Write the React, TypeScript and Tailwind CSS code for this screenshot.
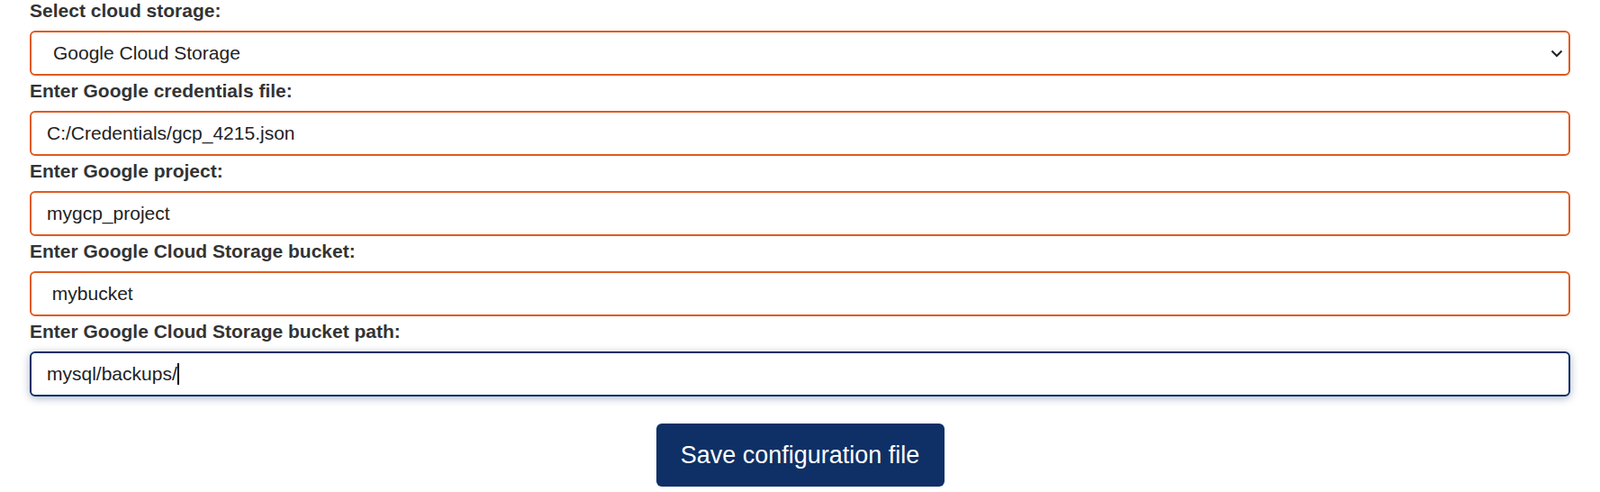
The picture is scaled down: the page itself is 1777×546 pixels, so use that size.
const fields = [
  { label: 'Enter Google credentials file:', value: 'C:/Credentials/gcp_4215.json' },
  { label: 'Enter Google project:', value: 'mygcp_project' },
  { label: 'Enter Google Cloud Storage bucket:', value: ' mybucket' },
]

function Label({ children, first }: { children: string; first?: boolean }) {
  return (
    <label
      className={`block text-[21px] leading-[24px] font-bold text-[#333333] mb-[10px] ${first ? '' : 'mt-[5px]'}`}
    >
      {children}
    </label>
  )
}

export default function App() {
  return (
    <div className="min-h-screen bg-white font-['Liberation_Sans',Arial,sans-serif]">
      <div className="px-[33px] pt-0">
        <Label first>Select cloud storage:</Label>
        <div className="relative">
          <select
            defaultValue="gcs"
            className="block w-full h-[50px] appearance-none rounded-[6px] border-2 border-[#e05a1f] bg-white pl-[24px] pr-10 text-[21px] text-[#222222] outline-none"
          >
            <option value="gcs">Google Cloud Storage</option>
            <option value="s3">Amazon S3</option>
            <option value="azure">Azure Blob Storage</option>
          </select>
          <svg
            className="pointer-events-none absolute right-[8px] top-1/2 -translate-y-1/2"
            width="14"
            height="10"
            viewBox="0 0 14 10"
            fill="none"
          >
            <path d="M1.5 2.5 L7 8 L12.5 2.5" stroke="#222" strokeWidth="2" />
          </svg>
        </div>

        {fields.map((f) => (
          <div key={f.label}>
            <Label>{f.label}</Label>
            <input
              readOnly
              defaultValue={f.value}
              className="block w-full h-[50px] rounded-[6px] border-2 border-[#e05a1f] bg-white pl-[17px] text-[21px] text-[#222222] outline-none"
            />
          </div>
        ))}

        <Label>Enter Google Cloud Storage bucket path:</Label>
        <div className="flex h-[50px] w-full items-center rounded-[6px] border-2 border-[#0f2f66] bg-white pl-[17px] text-[21px] text-[#222222] shadow-[0_2px_10px_rgba(15,47,102,0.35)]">
          <span>mysql/backups/</span>
          <span className="inline-block h-[24px] w-[2px] bg-black" />
        </div>

        <div className="flex justify-center pt-[30px]">
          <button className="h-[70px] w-[320px] rounded-[6px] bg-[#0f3066] text-[27px] text-white">
            Save configuration file
          </button>
        </div>
      </div>
    </div>
  )
}
